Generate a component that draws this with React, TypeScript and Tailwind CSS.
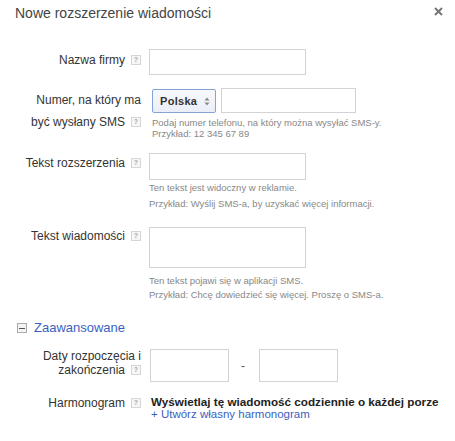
import React from "react";

function Help() {
  return (
    <span className="inline-flex items-center justify-center w-[10px] h-[10px] border border-[#d6d6d6] bg-[#f7f7f7] text-[#aaa] text-[7px] leading-none font-bold align-middle ml-[6px] relative top-[-1px]">
      ?
    </span>
  );
}

function Input({ w, h, cls = "" }: { w: string; h: string; cls?: string }) {
  return <div className={`border border-[#d3d3d3] bg-white ${w} ${h} ${cls}`} />;
}

export default function App() {
  return (
    <div className="relative w-[455px] h-[441px] bg-white overflow-hidden font-['Liberation_Sans',Arial,sans-serif] text-[#333]">
      {/* header */}
      <div className="flex items-center justify-between pl-[15px] pr-[12px] pt-[4px] h-[22px]">
        <div className="text-[14px] leading-[18px] text-[#444]">Nowe rozszerzenie wiadomości</div>
        <svg width="9" height="9" viewBox="0 0 9 9" className="mt-[-4px]">
          <path d="M1 1 L8 8 M8 1 L1 8" stroke="#777" strokeWidth="2" />
        </svg>
      </div>

      {/* row 1 */}
      <div className="flex mt-[27px]">
        <div className="w-[141px] text-right text-[12px] leading-[14px] pt-[4px]">
          Nazwa firmy
          <Help />
        </div>
        <div className="ml-[8px]">
          <Input w="w-[157px]" h="h-[26px]" />
        </div>
      </div>

      {/* row 2 */}
      <div className="flex mt-[13px]">
        <div className="w-[141px] text-right text-[12px] leading-[22px] pt-[1px]">
          Numer, na który ma
          <br />
          być wysłany SMS
          <Help />
        </div>
        <div className="ml-[11px]">
          <div className="flex items-start">
            <div className="mt-[1px] w-[64px] h-[24px] rounded-[2px] border border-[#86a3d6] bg-gradient-to-b from-[#f8f9fc] to-[#eaeef6] flex items-center justify-between pl-[7px] pr-[5px]">
              <span className="text-[11px] font-bold text-[#333] tracking-[0.3px]">Polska</span>
              <svg width="6" height="9" viewBox="0 0 6 9">
                <path d="M0.5 3.5 L3 0.5 L5.5 3.5 Z M0.5 5.5 L3 8.5 L5.5 5.5 Z" fill="#888" />
              </svg>
            </div>
            <Input w="w-[135px]" h="h-[25px]" cls="ml-[5px]" />
          </div>
          <div className="mt-[4px] text-[9.5px] leading-[11px] text-[#888]">
            Podaj numer telefonu, na który można wysyłać SMS-y.
            <br />
            Przykład: 12 345 67 89
          </div>
        </div>
      </div>

      {/* row 3 */}
      <div className="flex mt-[14px]">
        <div className="w-[141px] text-right text-[12px] leading-[14px] pt-[3px]">
          Tekst rozszerzenia
          <Help />
        </div>
        <div className="ml-[8px]">
          <Input w="w-[157px]" h="h-[27px]" />
          <div className="text-[9.5px] leading-[16px] text-[#888]">
            Ten tekst jest widoczny w reklamie.
            <br />
            Przykład: Wyślij SMS-a, by uzyskać więcej informacji.
          </div>
        </div>
      </div>

      {/* row 4 */}
      <div className="flex mt-[15px]">
        <div className="w-[141px] text-right text-[12px] leading-[14px] pt-[2px]">
          Tekst wiadomości
          <Help />
        </div>
        <div className="ml-[8px]">
          <Input w="w-[157px]" h="h-[41px]" />
          <div className="mt-[6px] text-[9.5px] leading-[14px] text-[#888]">
            Ten tekst pojawi się w aplikacji SMS.
            <br />
            Przykład: Chcę dowiedzieć się więcej. Proszę o SMS-a.
          </div>
        </div>
      </div>

      {/* advanced */}
      <div className="flex items-center mt-[18px] pl-[17px]">
        <span className="w-[10px] h-[10px] border border-[#aaa] bg-[#f4f4f4] flex items-center justify-center">
          <span className="w-[6px] h-[1px] bg-[#555]" />
        </span>
        <span className="ml-[7px] text-[13px] leading-[16px] text-[#3b5fc0]">Zaawansowane</span>
      </div>

      {/* dates */}
      <div className="flex mt-[13px]">
        <div className="w-[141px] text-right text-[12px] leading-[14px]">
          Daty rozpoczęcia i
          <br />
          zakończenia
          <Help />
        </div>
        <div className="ml-[9px] flex items-center">
          <Input w="w-[79px]" h="h-[33px]" />
          <span className="mx-[12px] text-[12px] text-[#555]">-</span>
          <Input w="w-[79px]" h="h-[33px]" cls="ml-[2px]" />
        </div>
      </div>

      {/* schedule */}
      <div className="flex mt-[13px]">
        <div className="w-[141px] text-right text-[12px] leading-[14px] pt-[1px]">
          Harmonogram
          <Help />
        </div>
        <div className="ml-[10px]">
          <div className="text-[11.7px] leading-[13px] font-bold text-[#222]">
            Wyświetlaj tę wiadomość codziennie o każdej porze
          </div>
          <div className="text-[11.5px] leading-[13px] text-[#3b5fc0]">+ Utwórz własny harmonogram</div>
        </div>
      </div>
    </div>
  );
}
